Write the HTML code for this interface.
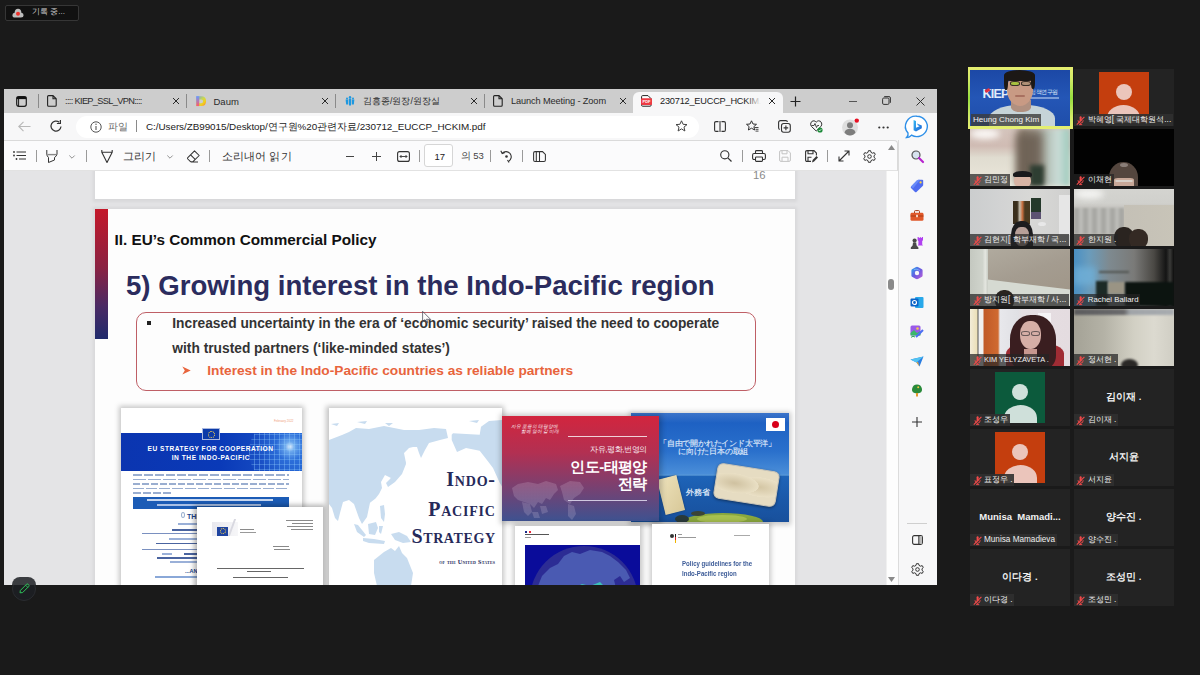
<!DOCTYPE html>
<html><head><meta charset="utf-8">
<style>
*{margin:0;padding:0;box-sizing:border-box}
html,body{width:1200px;height:675px;overflow:hidden;background:#1a1a1a;font-family:"Liberation Sans",sans-serif}
.a{position:absolute}
svg{position:absolute;overflow:visible}
.t{position:absolute;white-space:nowrap;line-height:1}
.tile{position:absolute;width:100px;height:57px;background:#232323;overflow:hidden}
.lbl{position:absolute;left:0;bottom:0;height:12px;background:#2e2e2e;color:#e8e8e8;font-size:9px;line-height:12px;padding:0 3px 0 14px;white-space:nowrap}
.cname{position:absolute;left:0;width:100px;top:22px;text-align:center;color:#f0f0f0;font-weight:bold;font-size:10px}
</style></head><body>
<!-- recording indicator -->
<div class="a" style="left:5px;top:5px;width:74px;height:16px;background:#111;border:1px solid #363636;border-radius:2px"></div>
<svg style="left:11.5px;top:7.5px" width="12" height="10" viewBox="0 0 12 10"><path d="M3 9.5 Q0.4 9.5 0.4 7.2 Q0.4 5 2.6 4.8 Q2.8 0.8 6 0.8 Q9.2 0.8 9.4 4.8 Q11.6 5 11.6 7.2 Q11.6 9.5 9 9.5 Z" fill="#bdbdbd"/><circle cx="6" cy="5.8" r="2" fill="#f0302a"/></svg>
<div class="t" style="left:32px;top:8px;font-size:8px;color:#cfcfcf">기록 중...</div>

<!-- browser frame -->
<div class="a" style="left:4px;top:89px;width:933px;height:496px;background:#f7f7f8"></div>
<!-- tab bar -->
<div class="a" style="left:4px;top:89px;width:933px;height:24px;background:#cdcdcd"></div>
<!-- active tab -->
<div class="a" style="left:632.5px;top:92px;width:150px;height:21px;background:#f7f7f8;border-radius:6px 6px 0 0"></div>
<!-- tab bar icons -->
<svg style="left:16px;top:96px" width="11" height="11" viewBox="0 0 11 11"><rect x="0.7" y="0.7" width="9.6" height="9.6" rx="2" fill="none" stroke="#1a1a1a" stroke-width="1.2"/><rect x="0.7" y="0.7" width="9.6" height="2.4" fill="#111"/><line x1="2.6" y1="3" x2="2.6" y2="10" stroke="#1a1a1a" stroke-width="1"/></svg>
<div class="a" style="left:38px;top:94px;width:1px;height:14px;background:#8a8a8a"></div>
<svg style="left:47px;top:95px" width="10" height="12" viewBox="0 0 10 12"><path d="M1.6 0.6 H6 L9.2 3.8 V10.2 Q9.2 11.2 8.2 11.2 H1.6 Q0.6 11.2 0.6 10.2 V1.6 Q0.6 0.6 1.6 0.6 Z M6 0.6 V3.8 H9.2" fill="none" stroke="#222" stroke-width="1.1"/></svg>
<div class="t" style="left:65px;top:96.5px;font-size:9.2px;color:#2a2a2a;letter-spacing:-0.65px">:::: KIEP_SSL_VPN::::</div>
<svg style="left:172px;top:97px" width="8" height="8" viewBox="0 0 8 8"><path d="M1 1 L7 7 M7 1 L1 7" stroke="#2a2a2a" stroke-width="1"/></svg>
<div class="a" style="left:186px;top:94px;width:1px;height:14px;background:#8a8a8a"></div>
<svg style="left:196px;top:95.7px" width="10.4" height="10.4" viewBox="0 0 10.4 10.4"><defs><linearGradient id="dg1" x1="0" y1="0" x2="0" y2="1"><stop offset="0" stop-color="#6a98ff"/><stop offset="1" stop-color="#ff5a6a"/></linearGradient><linearGradient id="dg2" x1="0" y1="0" x2="1" y2="1"><stop offset="0" stop-color="#6aa0f0"/><stop offset="0.45" stop-color="#c8d850"/><stop offset="0.7" stop-color="#f0d020"/><stop offset="1" stop-color="#ff7a30"/></linearGradient></defs><path d="M0.3 0.3 H5.2 Q10.1 0.3 10.1 5.2 Q10.1 10.1 5.2 10.1 H0.3 Z M3.2 3.4 V7.2 H5.2 Q7.1 7.2 7.1 5.3 Q7.1 3.4 5.2 3.4 Z" fill="url(#dg2)" fill-rule="evenodd"/><path d="M0.3 0.3 H3.2 V10.1 H0.3 Z" fill="url(#dg1)"/></svg>
<div class="t" style="left:213.5px;top:96.5px;font-size:9.5px;color:#2a2a2a">Daum</div>
<svg style="left:321px;top:97px" width="8" height="8" viewBox="0 0 8 8"><path d="M1 1 L7 7 M7 1 L1 7" stroke="#2a2a2a" stroke-width="1"/></svg>
<div class="a" style="left:335px;top:94px;width:1px;height:14px;background:#8a8a8a"></div>
<svg style="left:344.5px;top:96px" width="10" height="10" viewBox="0 0 10 10"><g fill="#1e98e0"><circle cx="5" cy="1.3" r="1.2"/><path d="M3.8 2.6 H6.2 L6 9.4 H4 Z"/><circle cx="2" cy="2.4" r="1"/><path d="M0.6 3.6 H3.2 L3.2 8.4 H1.2 Z"/><circle cx="8" cy="2.4" r="1"/><path d="M6.8 3.6 H9.4 L8.8 8.4 H6.8 Z"/></g></svg>
<div class="t" style="left:363px;top:96.5px;font-size:8.8px;color:#2a2a2a">김흥종/원장/원장실</div>
<svg style="left:470px;top:97px" width="8" height="8" viewBox="0 0 8 8"><path d="M1 1 L7 7 M7 1 L1 7" stroke="#2a2a2a" stroke-width="1"/></svg>
<div class="a" style="left:484px;top:94px;width:1px;height:14px;background:#8a8a8a"></div>
<svg style="left:493px;top:95px" width="10" height="12" viewBox="0 0 10 12"><path d="M1.6 0.6 H6 L9.2 3.8 V10.2 Q9.2 11.2 8.2 11.2 H1.6 Q0.6 11.2 0.6 10.2 V1.6 Q0.6 0.6 1.6 0.6 Z M6 0.6 V3.8 H9.2" fill="none" stroke="#222" stroke-width="1.1"/></svg>
<div class="t" style="left:511px;top:96.5px;font-size:9.2px;color:#2a2a2a;letter-spacing:-0.1px">Launch Meeting - Zoom</div>
<svg style="left:619px;top:97px" width="8" height="8" viewBox="0 0 8 8"><path d="M1 1 L7 7 M7 1 L1 7" stroke="#2a2a2a" stroke-width="1"/></svg>
<svg style="left:641px;top:95px" width="11" height="12" viewBox="0 0 11 12"><path d="M1.6 0.6 H7 L10 3.6 V10.4 Q10 11.2 9.2 11.2 H1.6 Q0.6 11.2 0.6 10.2 V1.6 Q0.6 0.6 1.6 0.6 Z" fill="#fff" stroke="#222" stroke-width="1"/><rect x="0" y="3.3" width="11" height="6.7" rx="1" fill="#ee3b44"/><text x="5.5" y="8.2" font-size="4" fill="#fff" text-anchor="middle" font-family="Liberation Sans" font-weight="bold">PDF</text></svg>
<div class="a" style="left:660px;top:95px;width:101px;height:13px;overflow:hidden"><div class="t" style="left:0;top:1.5px;font-size:9.2px;color:#222;letter-spacing:-0.2px">230712_EUCCP_HCKIM.pdf</div><div class="a" style="left:86px;top:0;width:15px;height:13px;background:linear-gradient(90deg,rgba(247,247,248,0),#f7f7f8)"></div></div>
<svg style="left:768px;top:97px" width="8" height="8" viewBox="0 0 8 8"><path d="M1 1 L7 7 M7 1 L1 7" stroke="#2a2a2a" stroke-width="1"/></svg>
<svg style="left:790px;top:95.5px" width="11" height="11" viewBox="0 0 11 11"><path d="M5.5 0.5 V10.5 M0.5 5.5 H10.5" stroke="#222" stroke-width="1.2"/></svg>
<div class="a" style="left:849px;top:100.5px;width:8px;height:1px;background:#555"></div>
<svg style="left:882px;top:96px" width="9" height="9" viewBox="0 0 9 9"><rect x="0.6" y="2" width="6.4" height="6.4" rx="1.2" fill="none" stroke="#333" stroke-width="1"/><path d="M2.2 0.6 H7 Q8.4 0.6 8.4 2 V6.8" fill="none" stroke="#333" stroke-width="1"/></svg>
<svg style="left:916px;top:96.5px" width="9" height="9" viewBox="0 0 9 9"><path d="M0.5 0.5 L8.5 8.5 M8.5 0.5 L0.5 8.5" stroke="#333" stroke-width="1"/></svg>

<!-- address row -->
<div class="a" style="left:76px;top:115.5px;width:623px;height:22px;background:#fff;border-radius:11px"></div>
<svg style="left:18px;top:120.5px" width="13" height="11" viewBox="0 0 13 11"><path d="M12.5 5.5 H1 M5.5 0.8 L0.8 5.5 L5.5 10.2" fill="none" stroke="#b8b8b8" stroke-width="1.1"/></svg>
<svg style="left:50px;top:120px" width="13" height="12" viewBox="0 0 13 12"><path d="M11 6.5 A5 5 0 1 1 9.3 2.3" fill="none" stroke="#333" stroke-width="1.2"/><path d="M10.4 0 V3.5 H6.9" fill="none" stroke="#333" stroke-width="1.2"/></svg>
<svg style="left:90px;top:120.5px" width="12" height="12" viewBox="0 0 12 12"><circle cx="6" cy="6" r="5.2" fill="none" stroke="#555" stroke-width="1"/><path d="M6 5 V9" stroke="#555" stroke-width="1.1"/><circle cx="6" cy="3.3" r="0.7" fill="#555"/></svg>
<div class="t" style="left:108px;top:121.5px;font-size:10px;color:#666">파일</div>
<div class="a" style="left:136px;top:120px;width:1px;height:12px;background:#8a8a8a"></div>
<div class="t" style="left:146px;top:122px;font-size:9.9px;color:#222;letter-spacing:-0.05px">C:/Users/ZB99015/Desktop/연구원%20관련자료/230712_EUCCP_HCKIM.pdf</div>
<svg style="left:675px;top:120px" width="13" height="12" viewBox="0 0 13 12"><path d="M6.5 0.8 L8.1 4.3 L12 4.6 L9 7.1 L9.9 11 L6.5 8.9 L3.1 11 L4 7.1 L1 4.6 L4.9 4.3 Z" fill="none" stroke="#444" stroke-width="1" stroke-linejoin="round"/></svg>
<svg style="left:714px;top:120.5px" width="12" height="11" viewBox="0 0 12 11"><path d="M4.5 0.6 H2 Q0.6 0.6 0.6 2 V9 Q0.6 10.4 2 10.4 H4.5 M7.5 0.6 H10 Q11.4 0.6 11.4 2 V9 Q11.4 10.4 10 10.4 H7.5 M6 0 V11" fill="none" stroke="#333" stroke-width="1.1"/></svg>
<svg style="left:746px;top:120px" width="13" height="12" viewBox="0 0 13 12"><path d="M5.5 0.8 L7 4 L10.5 4.3 L7.9 6.6 L8.6 10 L5.5 8.2 L2.4 10 L3.1 6.6 L0.5 4.3 L4 4 Z" fill="none" stroke="#333" stroke-width="1" stroke-linejoin="round"/><path d="M8.5 7.5 H12.5 M9.5 9.3 H12.5 M9.5 11.1 H12.5" stroke="#333" stroke-width="0.9"/></svg>
<svg style="left:778px;top:120px" width="13" height="13" viewBox="0 0 13 13"><rect x="3.5" y="3.5" width="8.8" height="8.8" rx="2.2" fill="none" stroke="#333" stroke-width="1.1"/><path d="M1.8 9.5 Q0.6 9.2 0.6 7.8 V2.6 Q0.6 0.6 2.6 0.6 H7.8 Q9.2 0.6 9.5 1.8" fill="none" stroke="#333" stroke-width="1.1"/><path d="M7.9 5.6 V10.2 M5.6 7.9 H10.2" stroke="#333" stroke-width="1.1"/></svg>
<svg style="left:810px;top:120px" width="13" height="13" viewBox="0 0 13 13"><path d="M6.2 11 L1.5 6.5 Q0.2 5 0.8 3 Q1.8 0.5 4 0.8 Q5.3 1 6.2 2.2 Q7.1 1 8.4 0.8 Q10.6 0.5 11.6 3 Q12.2 5 10.9 6.5 Z" fill="none" stroke="#333" stroke-width="1"/><path d="M1.5 5.5 H4 L5 3.5 L6.5 7.5 L7.5 5.5 H9" fill="none" stroke="#333" stroke-width="0.9"/><circle cx="10" cy="10" r="2.6" fill="#1d8a3a"/><path d="M8.8 10 L9.7 10.9 L11.3 9.2" fill="none" stroke="#fff" stroke-width="0.8"/></svg>
<svg style="left:841px;top:117px" width="20" height="20" viewBox="0 0 20 20"><circle cx="9" cy="10.5" r="8" fill="#dedede"/><circle cx="9" cy="8.2" r="3" fill="#7d7d7d"/><path d="M3.5 15.5 Q4.5 11.8 9 11.8 Q13.5 11.8 14.5 15.5 Q12.5 18.5 9 18.5 Q5.5 18.5 3.5 15.5 Z" fill="#7d7d7d"/><circle cx="15.8" cy="3.6" r="2.2" fill="#e81123"/></svg>
<svg style="left:878px;top:125.5px" width="11" height="3" viewBox="0 0 11 3"><circle cx="1.3" cy="1.5" r="1.1" fill="#333"/><circle cx="5.5" cy="1.5" r="1.1" fill="#333"/><circle cx="9.7" cy="1.5" r="1.1" fill="#333"/></svg>
<svg style="left:905px;top:115px" width="24" height="24" viewBox="0 0 24 24"><defs><linearGradient id="bg1" x1="0" y1="0" x2="1" y2="1"><stop offset="0" stop-color="#37b9f1"/><stop offset="1" stop-color="#1b62d8"/></linearGradient></defs><path d="M12 1.2 A10.5 10.2 0 1 1 6.5 20.2 Q4 22.6 1.6 22.6 Q3.6 20.6 3 18 A10.5 10.2 0 0 1 12 1.2 Z" fill="#fff" stroke="#2d8fe8" stroke-width="1.4"/><path d="M8.6 5 L11 5.9 V12.8 L14.6 11.2 L12.8 10.3 L12 8.6 L16.8 10.4 V13.3 L11 16.6 L8.6 15.2 Z" fill="url(#bg1)"/></svg>

<!-- pdf toolbar -->
<div class="a" style="left:4px;top:140px;width:894px;height:31px;background:#fbfbfc;border-top:1px solid #dadada;border-right:1px solid #dadada;border-bottom:1px solid #e2e2e2;border-top-right-radius:4px"></div>
<svg style="left:13px;top:151px" width="14" height="9" viewBox="0 0 14 9"><circle cx="1" cy="1" r="0.9" fill="#333"/><circle cx="1" cy="4.5" r="0.9" fill="#333"/><circle cx="3.5" cy="8" r="0.9" fill="#333"/><path d="M3.5 1 H13 M3.5 4.5 H13 M6 8 H13" stroke="#333" stroke-width="1"/></svg>
<div class="a" style="left:36px;top:150px;width:1px;height:12px;background:#9a9a9a"></div>
<svg style="left:46px;top:150px" width="12" height="13" viewBox="0 0 12 13"><path d="M0.8 0 V4 Q0.8 6 2.5 7.5 V12.5 L8.5 10 V7.5 Q11 6 11 4 V0" fill="none" stroke="#333" stroke-width="1"/><path d="M1.5 4.6 H10.3" stroke="#888" stroke-width="1.4"/></svg>
<svg style="left:69px;top:155px" width="6" height="4" viewBox="0 0 6 4"><path d="M0.3 0.5 L3 3.2 L5.7 0.5" fill="none" stroke="#777" stroke-width="0.8"/></svg>
<div class="a" style="left:86px;top:150px;width:1px;height:12px;background:#9a9a9a"></div>
<svg style="left:101px;top:150px" width="12" height="13" viewBox="0 0 12 13"><path d="M0.8 0 V2.2 H11.2 V0 M0.8 2.2 L6 12.5 L11.2 2.2" fill="none" stroke="#333" stroke-width="1.1" stroke-linejoin="round"/></svg>
<div class="t" style="left:122.5px;top:151px;font-size:10.5px;color:#333">그리기</div>
<svg style="left:167px;top:155px" width="6" height="4" viewBox="0 0 6 4"><path d="M0.3 0.5 L3 3.2 L5.7 0.5" fill="none" stroke="#777" stroke-width="0.8"/></svg>
<svg style="left:187px;top:150px" width="13" height="13" viewBox="0 0 13 13"><path d="M7.5 0.8 L12.2 5.5 L6 11.7 H3.5 L0.8 9 Q0.2 8.3 0.8 7.6 Z M3.6 4.8 L8.4 9.6 M4 12 H11" fill="none" stroke="#333" stroke-width="1.05" stroke-linejoin="round"/></svg>
<div class="a" style="left:209px;top:150px;width:1px;height:12px;background:#9a9a9a"></div>
<div class="t" style="left:222px;top:151px;font-size:10.5px;color:#333;letter-spacing:0.1px">소리내어 읽기</div>
<div class="a" style="left:346px;top:155.5px;width:8px;height:1px;background:#444"></div>
<svg style="left:372px;top:151.5px" width="9" height="9" viewBox="0 0 9 9"><path d="M4.5 0 V9 M0 4.5 H9" stroke="#444" stroke-width="1"/></svg>
<svg style="left:397px;top:150.5px" width="13" height="11" viewBox="0 0 13 11"><rect x="0.6" y="0.6" width="11.8" height="9.8" rx="2" fill="none" stroke="#333" stroke-width="1.1"/><path d="M3 5.5 H10 M4.5 4 L3 5.5 L4.5 7 M8.5 4 L10 5.5 L8.5 7" fill="none" stroke="#333" stroke-width="0.9"/></svg>
<div class="a" style="left:419px;top:150px;width:1px;height:12px;background:#9a9a9a"></div>
<div class="a" style="left:424px;top:144px;width:29px;height:23px;background:#fff;border:1px solid #d6d6d6;border-radius:3px"></div>
<div class="t" style="left:434.5px;top:151.5px;font-size:9.5px;color:#222">17</div>
<div class="t" style="left:460.5px;top:151px;font-size:9.5px;color:#444">의 53</div>
<div class="a" style="left:490px;top:150px;width:1px;height:12px;background:#9a9a9a"></div>
<svg style="left:500px;top:149.5px" width="13" height="13" viewBox="0 0 13 13"><path d="M2.2 3.3 A5.2 5.2 0 1 1 8.5 11.4" fill="none" stroke="#333" stroke-width="1.1"/><path d="M0.8 0.8 L2.2 3.6 L5 2.4" fill="none" stroke="#333" stroke-width="1.1"/><circle cx="6.5" cy="6.5" r="1.3" fill="#333"/><path d="M7.5 10 L9 12.5" stroke="#333" stroke-width="1.1"/></svg>
<div class="a" style="left:522px;top:150px;width:1px;height:12px;background:#9a9a9a"></div>
<svg style="left:533px;top:150.5px" width="13" height="11" viewBox="0 0 13 11"><path d="M6.5 0.6 H2 Q0.6 0.6 0.6 2 V9 Q0.6 10.4 2 10.4 H6.5 Z M6.5 0.6 H9.5 L12.4 3.5 V9 Q12.4 10.4 11 10.4 H6.5 M3.3 0.6 V10.4" fill="none" stroke="#333" stroke-width="1.05"/></svg>
<svg style="left:720px;top:150px" width="12" height="12" viewBox="0 0 12 12"><circle cx="4.8" cy="4.8" r="4.1" fill="none" stroke="#333" stroke-width="1.1"/><path d="M7.8 7.8 L11.5 11.5" stroke="#333" stroke-width="1.2"/></svg>
<div class="a" style="left:742px;top:150px;width:1px;height:12px;background:#9a9a9a"></div>
<svg style="left:752px;top:150px" width="14" height="12" viewBox="0 0 14 12"><path d="M3.5 3.5 V1.5 Q3.5 0.6 4.5 0.6 H9.5 Q10.5 0.6 10.5 1.5 V3.5" fill="none" stroke="#333" stroke-width="1.1"/><path d="M3 9.5 H2 Q0.6 9.5 0.6 8 V5 Q0.6 3.5 2 3.5 H12 Q13.4 3.5 13.4 5 V8 Q13.4 9.5 12 9.5 H11" fill="none" stroke="#333" stroke-width="1.1"/><rect x="3.5" y="7" width="7" height="4.4" rx="0.8" fill="none" stroke="#333" stroke-width="1.1"/></svg>
<svg style="left:779px;top:150px" width="12" height="12" viewBox="0 0 12 12"><path d="M0.6 2 Q0.6 0.6 2 0.6 H9 L11.4 3 V10 Q11.4 11.4 10 11.4 H2 Q0.6 11.4 0.6 10 Z M3 0.6 V3.8 H8 V0.6 M3 11.4 V7.2 H9 V11.4" fill="none" stroke="#c4c4c4" stroke-width="1"/></svg>
<svg style="left:805px;top:150px" width="13" height="13" viewBox="0 0 13 13"><path d="M6 11.4 H2 Q0.6 11.4 0.6 10 V2 Q0.6 0.6 2 0.6 H9 L11.4 3 V5.5 M3 0.6 V3.8 H8 V0.6 M3 11.4 V7.2 H6.5" fill="none" stroke="#333" stroke-width="1.1"/><path d="M7 12.5 L7.6 10 L11.5 6.1 L13 7.6 L9.1 11.5 Z" fill="#333"/></svg>
<div class="a" style="left:827px;top:150px;width:1px;height:12px;background:#9a9a9a"></div>
<svg style="left:838px;top:150px" width="12" height="12" viewBox="0 0 12 12"><path d="M1 11 L11 1 M6.5 1 H11 V5.5 M1 6.5 V11 H5.5" fill="none" stroke="#333" stroke-width="1.1"/></svg>
<svg style="left:863px;top:149.5px" width="13" height="13" viewBox="0 0 13 13"><path d="M5.4 0.7 H7.6 L8 2.4 L9.5 3.2 L11.2 2.6 L12.3 4.5 L11 5.7 V7.3 L12.3 8.5 L11.2 10.4 L9.5 9.8 L8 10.6 L7.6 12.3 H5.4 L5 10.6 L3.5 9.8 L1.8 10.4 L0.7 8.5 L2 7.3 V5.7 L0.7 4.5 L1.8 2.6 L3.5 3.2 L5 2.4 Z" fill="none" stroke="#333" stroke-width="1" stroke-linejoin="round"/><circle cx="6.5" cy="6.5" r="1.8" fill="none" stroke="#333" stroke-width="1"/></svg>

<!-- pdf view -->
<div class="a" style="left:4px;top:171px;width:882px;height:414px;background:#e4e4e6;overflow:hidden"></div>
<div class="a" style="left:886px;top:171px;width:12px;height:414px;background:#fdfdfd;border-left:1px solid #f0f0f0"></div>
<svg style="left:888px;top:145px" width="7" height="5" viewBox="0 0 7 5"><path d="M0 5 L3.5 0 L7 5 Z" fill="#8a8a8a"/></svg>
<svg style="left:888px;top:577px" width="7" height="5" viewBox="0 0 7 5"><path d="M0 0 L3.5 5 L7 0 Z" fill="#8a8a8a"/></svg>
<div class="a" style="left:888px;top:278.5px;width:6px;height:11.5px;background:#8a8a8a;border-radius:3px"></div>
<div class="a" style="left:898px;top:140px;width:1px;height:445px;background:#dcdcdc"></div>

<!-- pdf pages -->
<div class="a" style="left:0;top:0;width:886px;height:585px;clip-path:inset(171px 0 0 4px)">
  <div class="a" style="left:93px;top:150px;width:704px;height:52px;background:rgba(0,0,0,0.05);filter:blur(1.5px)"></div>
  <div class="a" style="left:95px;top:150px;width:700px;height:49px;background:#fff"></div>
  <div class="t" style="left:753px;top:170px;font-size:11.3px;color:#8a8a8a">16</div>
  <div class="a" style="left:93px;top:207px;width:704px;height:400px;background:rgba(0,0,0,0.05);filter:blur(1.5px)"></div>
  <div class="a" style="left:95px;top:209px;width:700px;height:400px;background:#fdfdfd"></div>
  <div class="a" style="left:95px;top:209px;width:12.7px;height:130px;background:linear-gradient(180deg,#c4182a 0%,#8a2242 45%,#4a2a64 75%,#1f2a6c 100%)"></div>
  <div class="t" style="left:114.5px;top:232px;font-size:15.3px;font-weight:bold;color:#111">II. EU’s Common Commercial Policy</div>
  <div class="t" style="left:126px;top:271.6px;font-size:27.6px;font-weight:bold;color:#2b2c5e">5) Growing interest in the Indo-Pacific region</div>
  <div class="a" style="left:135.5px;top:311.5px;width:620px;height:79px;border:1.5px solid #bf5f66;border-radius:10px"></div>
  <div class="a" style="left:147px;top:321px;width:4px;height:4px;background:#222"></div>
  <div class="t" style="left:172.3px;top:317px;font-size:13.77px;font-weight:bold;color:#333">Increased uncertainty in the era of ‘economic security’ raised the need to cooperate</div>
  <div class="t" style="left:172.3px;top:341.5px;font-size:13.77px;font-weight:bold;color:#333">with trusted partners (‘like-minded states’)</div>
  <svg style="left:182px;top:366px" width="9" height="9" viewBox="0 0 9 9"><path d="M0.3 0.5 L8.7 4.5 L0.3 8.5 L2.8 4.5 Z" fill="#e8643c"/></svg>
  <div class="t" style="left:207.3px;top:364.4px;font-size:13.7px;font-weight:bold;color:#e8643c">Interest in the Indo-Pacific countries as reliable partners</div>
  <svg style="left:422px;top:311px" width="11" height="13" viewBox="0 0 11 13"><path d="M0.6 0.3 L0.6 10.8 L3 8.6 L4.6 12 L6 11.4 L4.5 8.2 L8.8 8.6 Z" fill="none" stroke="#505060" stroke-width="0.8" stroke-linejoin="round"/></svg>
  <!-- IMAGES -->
  <!-- EU doc -->
  <div class="a" style="left:119px;top:406px;width:185px;height:190px;background:rgba(0,0,0,0.22);filter:blur(2.5px)"></div>
  <div class="a" style="left:121px;top:408px;width:181px;height:190px;background:#fff;overflow:hidden">
    <div class="a" style="left:0;top:25px;width:181px;height:38px;background:linear-gradient(90deg,#0b35b0 0%,#0a3ab8 55%,#1448c0 75%,#1f60d0 100%);overflow:hidden">
      <div class="a" style="left:128px;top:-14px;width:66px;height:66px;border-radius:50%;background:radial-gradient(circle at 62% 42%,rgba(230,245,255,.95) 0,rgba(140,200,250,.7) 5px,rgba(60,130,230,.5) 14px,rgba(40,100,210,.2) 33px);"></div>
      <div class="a" style="left:128px;top:-14px;width:66px;height:66px;border-radius:50%;background:repeating-linear-gradient(90deg,rgba(150,210,255,.35) 0 1px,transparent 1px 5px),repeating-linear-gradient(0deg,rgba(150,210,255,.3) 0 1px,transparent 1px 5px)"></div>
    </div>
    <div class="a" style="left:81px;top:19.5px;width:17.5px;height:12.5px;background:#0b3aa8;border:0.8px solid #a9b8e0"><div class="a" style="left:4.5px;top:2px;width:7px;height:7px;border:1px dotted #ffd84a;border-radius:50%"></div></div>
    <div class="t" style="left:153px;top:12px;font-size:3px;color:#f0a080">February 2022</div>
    <div class="t" style="left:26.5px;top:38.3px;font-size:6.6px;font-weight:bold;color:#fff;letter-spacing:0.5px">EU STRATEGY FOR COOPERATION</div>
    <div class="t" style="left:50.7px;top:47px;font-size:6.6px;font-weight:bold;color:#fff;letter-spacing:0.55px">IN THE INDO-PACIFIC</div>
    <div class="a" style="left:11.6px;top:66px;width:156px;height:1.5px;background:repeating-linear-gradient(90deg,#9aaed0 0 9px,transparent 9px 11px)"></div>
    <div class="a" style="left:11.6px;top:70.5px;width:156px;height:1.5px;background:repeating-linear-gradient(90deg,#9aaed0 0 13px,transparent 13px 15px)"></div>
    <div class="a" style="left:11.6px;top:75px;width:156px;height:1.5px;background:repeating-linear-gradient(90deg,#9aaed0 0 7px,transparent 7px 9px)"></div>
    <div class="a" style="left:11.6px;top:79.5px;width:156px;height:1.5px;background:repeating-linear-gradient(90deg,#9aaed0 0 11px,transparent 11px 13px)"></div>
    <div class="a" style="left:11.6px;top:84px;width:40px;height:1.5px;background:repeating-linear-gradient(90deg,#9aaed0 0 8px,transparent 8px 10px)"></div>
    <div class="a" style="left:11.6px;top:88.5px;width:156.4px;height:12.4px;background:#1c5cb6"></div>
    <div class="a" style="left:26px;top:90.7px;width:126px;height:2.2px;background:#c8d8f0"></div>
    <div class="a" style="left:36px;top:95.7px;width:104px;height:2.2px;background:#a9c0e6"></div>
    <div class="a" style="left:60px;top:104px;width:4px;height:6px;border:1px solid #9ab0d0;border-radius:50% 50% 50% 50%"></div>
    <div class="t" style="left:66px;top:104.5px;font-size:7px;font-weight:bold;color:#1a3f8a">THE</div>
    <div class="a" style="left:57px;top:115px;width:22px;height:1.5px;background:#9ab0d8"></div>
    <div class="a" style="left:51px;top:121px;width:26px;height:1.5px;background:#4a64a0"></div>
    <div class="a" style="left:21px;top:124.5px;width:60px;height:1px;background:#7a90c0"></div>
    <div class="a" style="left:48px;top:130px;width:30px;height:1.5px;background:#9ab0d8"></div>
    <div class="a" style="left:35px;top:134.5px;width:42px;height:1.5px;background:#4a64a0"></div>
    <div class="a" style="left:21px;top:140.5px;width:60px;height:1px;background:#7a90c0"></div>
    <div class="a" style="left:41px;top:145px;width:10px;height:1.5px;background:#9ab0d8"></div>
    <div class="a" style="left:63px;top:145px;width:14px;height:1.5px;background:#4a64a0"></div>
    <div class="a" style="left:36px;top:149px;width:42px;height:1.5px;background:#4a64a0"></div>
    <div class="a" style="left:49px;top:153px;width:28px;height:1.5px;background:#9ab0d8"></div>
    <div class="t" style="left:64px;top:160.5px;font-size:5.5px;font-weight:bold;color:#1a3f8a">...AND T</div>
    <div class="a" style="left:34px;top:168px;width:44px;height:1.5px;background:#8aa8d8"></div>
  </div>
  <!-- US doc -->
  <div class="a" style="left:326px;top:406px;width:178px;height:190px;background:rgba(0,0,0,0.22);filter:blur(2.5px)"></div>
  <div class="a" style="left:328.5px;top:408.3px;width:173.5px;height:190px;background:#fff;overflow:hidden">
    <svg style="left:0;top:0" width="174" height="190" viewBox="0 0 174 190">
      <g fill="#c8dcef">
      <path d="M0,32 L13,27 L20,24 L27,20 L40,21 L55,18 L75,22 L90,22 L105,20 L117,21 L119,30 L111,32 L100,35 L96,42 L92,50 L90,45 L88,39 L84,39 L80,40 L75,45 L77,55 L71,65 L62,70 L56,67 L52,74 L53,80 L50,86 L46.5,90.5 L41,94.7 L38,109 L33,116 L30,110 L25,96 L20,92 L14,94 L11,105 L9,113 L6,110 L3,100 L0,96 Z"/>
      <path d="M61,71 L66,64 L72,58 L75,50 L77,56 L73,66 L66,74 L59,79 L57,75 Z"/>
      <path d="M51,98 L55,97 L56,106 L55,114 L52,110 Z"/>
      <path d="M25,116 L29,117 L37,127 L35,129 L28,124 Z"/>
      <path d="M34,130 L45,131 L56,133 L55,136 L40,135 L34,133 Z"/>
      <path d="M39,116 L47,114 L49,120 L46,127 L40,126 Z"/>
      <path d="M50,118 L54,118 L52,126 L50,124 Z"/>
      <path d="M62,126 L70,124 L78,128 L82,134 L74,135 L66,132 Z"/>
      <path d="M45,152 L55,144 L62,140 L66,143 L70,138 L73,145 L78,150 L84,165 L82,178 L48,178 L45,165 Z"/>
      <path d="M122.7,26.7 L124,25.3 L150.7,26.7 L152,18.7 L160,13 L174,12 L174,80 L170.7,74.7 L164,60 L158.7,53 L150.7,42.7 L137,40 L128,44 L122.7,32 Z"/>
      <path d="M2,16 L10,15 L8,18 Z M28,14 L38,13 L36,16 Z M56,15 L64,15 L60,18 Z M140,13 L150,12 L148,15 Z"/>
      </g>
    </svg>
    <div class="t" style="right:7px;top:61px;font-family:'Liberation Serif',serif;font-weight:bold;font-size:20px;color:#262a5a;font-variant:small-caps;letter-spacing:0.8px;margin-right:-0.8px">Indo-</div>
    <div class="t" style="right:7px;top:91px;font-family:'Liberation Serif',serif;font-weight:bold;font-size:20px;color:#262a5a;font-variant:small-caps;letter-spacing:0.8px;margin-right:-0.8px">Pacific</div>
    <div class="t" style="right:7px;top:118px;font-family:'Liberation Serif',serif;font-weight:bold;font-size:20px;color:#262a5a;font-variant:small-caps;letter-spacing:0.6px;margin-right:-0.6px">Strategy</div>
    <div class="t" style="right:7px;top:151px;font-family:'Liberation Serif',serif;font-weight:bold;font-size:6.3px;color:#262a5a;font-variant:small-caps;letter-spacing:0.2px;margin-right:-0.2px">of the United States</div>
  </div>
  <!-- Japan doc -->
  <div class="a" style="left:629px;top:411.5px;width:162px;height:113px;background:rgba(0,0,0,0.2);filter:blur(2.5px)"></div>
  <div class="a" style="left:631px;top:413.4px;width:157.5px;height:109px;overflow:hidden;background:linear-gradient(180deg,#1a5cc0 0%,#2a70cc 35%,#4a8ed8 56%,#5a9ad8 57%,#1e64b8 58%,#1a58a8 80%,#18509c 100%)">
    <div class="a" style="left:0;top:0;width:157.5px;height:10px;background:linear-gradient(180deg,rgba(255,255,255,.15),transparent)"></div>
    <div class="a" style="left:135px;top:4.5px;width:19px;height:13px;background:#fff"><div class="a" style="left:6px;top:3px;width:7px;height:7px;border-radius:50%;background:#d8001a"></div></div>
    <div class="t" style="left:28px;top:26.5px;font-size:7.5px;font-weight:bold;color:#c8dcf4;letter-spacing:-0.2px">「自由で開かれたインド太平洋」</div>
    <div class="t" style="left:47px;top:35px;font-size:7.5px;font-weight:bold;color:#c8dcf4;letter-spacing:-0.2px">に向けた日本の取組</div>
    <div class="a" style="left:30px;top:64px;width:20px;height:36px;background:linear-gradient(135deg,#ede2bc,#d8c898);transform:rotate(-14deg);box-shadow:0 0 2px rgba(0,0,0,.4)"></div>
    <div class="a" style="left:84px;top:54px;width:63px;height:36px;background:radial-gradient(ellipse at 30% 50%,#cfc1a0 0,#e9dfc4 40%,transparent 41%),radial-gradient(ellipse at 72% 50%,#d4c6a4 0,#eae0c6 40%,transparent 41%),#e6dcc2;border-radius:6px;transform:rotate(9deg);border:1.5px solid #c8c4b8;box-shadow:0 1px 3px rgba(0,0,0,.45)"></div>
    <div class="t" style="left:55px;top:75.5px;font-size:7.5px;font-weight:bold;color:#d8e4f4">外務省</div>
    <div class="a" style="left:52px;top:100px;width:80px;height:18px;border-radius:50% 50% 0 0;background:#8aa83e"></div>
    <div class="a" style="left:66px;top:102px;width:50px;height:8px;border-radius:50%;background:#a8c050"></div>
    <div class="a" style="left:44px;top:102px;width:14px;height:8px;border-radius:50%;background:#2a3a3a"></div>
    <div class="a" style="left:60px;top:98px;width:14px;height:5px;border-radius:50%;background:#3a4436"></div>
  </div>
  <!-- Korean doc -->
  <div class="a" style="left:500px;top:414px;width:162px;height:110px;background:rgba(0,0,0,0.2);filter:blur(2.5px)"></div>
  <div class="a" style="left:502px;top:416.2px;width:157.4px;height:105.3px;overflow:hidden;background:linear-gradient(180deg,#d2253e 0%,#b23052 35%,#7e3f6e 65%,#3e5290 100%)">
    <svg style="left:8px;top:62px" width="80" height="42" viewBox="0 0 80 42"><defs><pattern id="dots" width="1.5" height="1.5" patternUnits="userSpaceOnUse"><circle cx="0.75" cy="0.75" r="0.5" fill="#f0e0f0"/></pattern></defs><g fill="url(#dots)" opacity="0.5"><path d="M2,10 L8,6 L18,4 L28,6 L36,3 L46,6 L48,12 L44,16 L40,22 L36,20 L32,26 L28,24 L24,30 L20,26 L14,24 L8,22 L4,18 Z"/><path d="M12,24 L20,26 L22,34 L18,38 L14,34 Z"/><path d="M30,28 L36,28 L38,34 L32,36 Z"/><path d="M22,34 L28,34 L30,40 L24,40 Z"/><path d="M50,8 L60,3 L70,4 L74,10 L70,16 L64,20 L60,26 L54,22 L52,14 Z"/><path d="M58,26 L64,28 L66,36 L62,42 L58,38 Z"/></g></svg>
    <div class="t" style="left:9px;top:8.5px;font-size:4.8px;color:#f8e8ee;font-style:italic;letter-spacing:-0.1px">자유 포용의 태평양에</div>
    <div class="t" style="left:19px;top:14px;font-size:4.8px;color:#f8e8ee;font-style:italic;letter-spacing:-0.1px">함께 열어 갈 미래</div>
    <div class="a" style="left:65.5px;top:19.5px;width:79.5px;height:1px;background:#f0d0d8"></div>
    <div class="t" style="right:12.5px;top:29.5px;font-size:8px;color:#f6e6ee;letter-spacing:-0.4px">자유,평화,번영의</div>
    <div class="t" style="right:12.5px;top:43px;font-size:15px;font-weight:bold;color:#fff;letter-spacing:-0.6px">인도-태평양</div>
    <div class="t" style="right:12.5px;top:60px;font-size:15px;font-weight:bold;color:#fff;letter-spacing:-0.6px">전략</div>
    <div class="a" style="left:65.5px;top:83.5px;width:79.5px;height:1px;background:#d0c8e0"></div>
  </div>
  <!-- French doc -->
  <div class="a" style="left:512.5px;top:523.5px;width:130px;height:70px;background:rgba(0,0,0,0.2);filter:blur(2.5px)"></div>
  <div class="a" style="left:514.5px;top:525.5px;width:125.5px;height:70px;background:#fff;overflow:hidden">
    <div class="a" style="left:10px;top:5px;width:2.5px;height:2.5px;background:#1a2a8a"></div><div class="a" style="left:14px;top:5px;width:2.5px;height:2.5px;background:#e82a3a"></div>
    <div class="a" style="left:10px;top:8.5px;width:24px;height:1px;background:#555"></div>
    <div class="a" style="left:10px;top:11.5px;width:6px;height:0.8px;background:#999"></div>
    <div class="a" style="left:10px;top:19.5px;width:115px;height:50px;background:#0a0c9a;overflow:hidden">
      <div class="a" style="left:5px;top:1px;width:108px;height:108px;border-radius:50%;background:#2c2c94"></div>
      <svg style="left:5px;top:1px" width="108" height="50" viewBox="0 0 108 50"><path d="M8,40 L12,30 L20,22 L28,18 L34,10 L42,6 L50,8 L60,4 L72,6 L80,10 L88,16 L96,24 L100,32 L94,36 L90,30 L84,34 L86,42 L80,48 L70,50 L30,50 L20,46 L14,48 Z" fill="#4a5ab2"/><path d="M36,50 L44,42 L52,38 L60,40 L70,36 L76,42 L72,50 Z" fill="#3cc0b8"/></svg>
    </div>
  </div>
  <!-- German doc -->
  <div class="a" style="left:650px;top:522px;width:121px;height:70px;background:rgba(0,0,0,0.2);filter:blur(2.5px)"></div>
  <div class="a" style="left:651.8px;top:524.3px;width:117px;height:70px;background:#fff;overflow:hidden">
    <div class="a" style="left:18px;top:10px;width:4px;height:4px;border-radius:50%;background:#333"></div>
    <div class="a" style="left:23.5px;top:10px;width:1px;height:3px;background:#222"></div><div class="a" style="left:23.5px;top:13px;width:1px;height:3px;background:#d8242a"></div><div class="a" style="left:23.5px;top:16px;width:1px;height:3px;background:#f0b400"></div>
    <div class="a" style="left:26px;top:10px;width:4px;height:0.8px;background:#999"></div><div class="a" style="left:26px;top:12.5px;width:18px;height:0.8px;background:#999"></div>
    <div class="a" style="left:82px;top:10.5px;width:16px;height:0.8px;background:#aaa"></div>
    <div class="t" style="left:30px;top:36px;font-size:7.6px;font-weight:bold;color:#3d5c98;transform:scaleX(0.8);transform-origin:0 0">Policy guidelines for the</div>
    <div class="t" style="left:30px;top:46px;font-size:7.6px;font-weight:bold;color:#3d5c98;transform:scaleX(0.8);transform-origin:0 0">Indo-Pacific region</div>
  </div>
  <!-- JOIN doc -->
  <div class="a" style="left:194px;top:505px;width:131px;height:90px;background:rgba(0,0,0,0.3);filter:blur(2.5px)"></div>
  <div class="a" style="left:196.5px;top:507px;width:126.5px;height:90px;background:#fff;overflow:hidden">
    <div class="a" style="left:15px;top:15px;width:26px;height:14px;background:linear-gradient(90deg,#e8e8ee,#f6f6f8)"></div>
    <div class="a" style="left:20.5px;top:20px;width:11px;height:9px;background:#1f44a0"><div class="a" style="left:2.5px;top:1.2px;width:6px;height:6px;border:0.8px dotted #ffd84a;border-radius:50%"></div></div>
    <div class="a" style="left:34px;top:12px;width:2px;height:17px;background:#d8d8e0;transform:skewX(-20deg)"></div>
    <div class="a" style="left:43px;top:22px;width:14px;height:1px;background:#8a8a8a"></div>
    <div class="a" style="left:43px;top:25px;width:16px;height:1px;background:#999"></div>
    <div class="a" style="left:89px;top:12.5px;width:27px;height:1px;background:#8a8a8a"></div>
    <div class="a" style="left:95px;top:15.5px;width:21px;height:1px;background:#8a8a8a"></div>
    <div class="a" style="left:90px;top:18.5px;width:26px;height:1px;background:#8a8a8a"></div>
    <div class="a" style="left:94px;top:21.5px;width:22px;height:1px;background:#8a8a8a"></div>
    <div class="a" style="left:76px;top:39px;width:16px;height:1px;background:#888"></div>
    <div class="a" style="left:77px;top:42px;width:16px;height:1px;background:#888"></div>
    <div class="a" style="left:20px;top:61px;width:87px;height:1px;background:#666"></div>
    <div class="a" style="left:50px;top:64px;width:24px;height:1px;background:#666"></div>
    <div class="a" style="left:36px;top:70px;width:55px;height:1px;background:#666"></div>
  </div>

</div>

<!-- sidebar icons -->
<svg style="left:911px;top:150px" width="13" height="13" viewBox="0 0 13 13"><circle cx="5" cy="5" r="4" fill="#d7e3ef" stroke="#555" stroke-width="1.2"/><path d="M8 8 L12 12" stroke="#b622ce" stroke-width="2.2" stroke-linecap="round"/></svg>
<svg style="left:910px;top:179px" width="14" height="13" viewBox="0 0 14 13"><path d="M1 7.5 L7 1.3 Q7.5 0.8 8.3 0.8 H12.2 Q13.2 0.8 13.2 1.8 V5.7 Q13.2 6.5 12.7 7 L6.5 13 Q5.8 13.6 5 13 L1 9 Q0.4 8.3 1 7.5 Z" fill="#4f6cf0"/><path d="M1 7.5 L7 1.3 Q7.5 0.8 8.3 0.8 H10 L3 9.5 Z" fill="#7aa0ff" opacity="0.6"/><circle cx="10.6" cy="3.4" r="1.1" fill="#ffd43b"/></svg>
<svg style="left:910px;top:210px" width="14" height="11" viewBox="0 0 14 11"><path d="M4.5 3 V1.5 Q4.5 0.6 5.4 0.6 H8.6 Q9.5 0.6 9.5 1.5 V3" fill="none" stroke="#a33a16" stroke-width="1"/><rect x="0.5" y="2.8" width="13" height="8" rx="1.4" fill="#e0582a"/><rect x="0.5" y="5.5" width="13" height="1" fill="#a83a14"/><rect x="6" y="4.8" width="2" height="2.4" fill="#f5d0bf"/></svg>
<svg style="left:910px;top:236px" width="14" height="14" viewBox="0 0 14 14"><path d="M7.6 1 H8.8 V2 H9.8 V1 H10.8 V2 H11.8 V1 H13 V4.2 L12.2 5 V8.6 L13 9.6 H7.6 L8.4 8.6 V5 L7.6 4.2 Z" fill="#b040f0"/><circle cx="4.6" cy="4.6" r="2.1" fill="#4a4a4a"/><path d="M3 6.6 H6.2 L6.6 9.6 L8.4 11.4 V13 H0.8 V11.4 L2.6 9.6 Z" fill="#4a4a4a"/></svg>
<svg style="left:910px;top:266px" width="14" height="14" viewBox="0 0 14 14"><defs><linearGradient id="m1" x1="0" y1="0" x2="1" y2="1"><stop offset="0" stop-color="#2aa8f0"/><stop offset="0.5" stop-color="#6a5ae0"/><stop offset="1" stop-color="#c060d8"/></linearGradient></defs><path d="M7 0.8 Q7.8 0.8 8.4 1.2 L12 3.3 Q12.6 3.7 12.6 4.4 V9.6 Q12.6 10.3 12 10.7 L8.4 12.8 Q7.7 13.2 7 13.2 Q6.3 13.2 5.6 12.8 L2 10.7 Q1.4 10.3 1.4 9.6 V4.4 Q1.4 3.7 2 3.3 L5.6 1.2 Q6.2 0.8 7 0.8 Z" fill="url(#m1)"/><circle cx="7" cy="7" r="2.2" fill="#f7f7f8"/><path d="M4 3.5 Q7 2.5 10 4.5" fill="none" stroke="#8ad0ff" stroke-width="1" opacity=".6"/></svg>
<svg style="left:910px;top:295.5px" width="14" height="13" viewBox="0 0 14 13"><rect x="5" y="1" width="8.5" height="11" rx="1" fill="#28a8ea"/><rect x="0.5" y="2.5" width="8" height="8" rx="1" fill="#0a64c8"/><circle cx="4.5" cy="6.5" r="2" fill="none" stroke="#fff" stroke-width="1.2"/></svg>
<svg style="left:910px;top:325px" width="14" height="13" viewBox="0 0 14 13"><rect x="0.5" y="0.5" width="10" height="10" rx="1.5" fill="#9a5ae8"/><path d="M0.5 8 L4 5 L7 8 L10.5 6 V10.5 H0.5 Z" fill="#3ab86a"/><circle cx="7.5" cy="3.5" r="1.3" fill="#f2c94c"/><path d="M6 12 L13 5" stroke="#4c6ef5" stroke-width="2"/><path d="M1 12.3 Q3 10.5 5 12" fill="none" stroke="#2fa85a" stroke-width="1"/></svg>
<svg style="left:910px;top:355.5px" width="14" height="11" viewBox="0 0 14 11"><path d="M0.5 3.5 L13.5 0.5 L9.5 10.5 L6.5 6.5 Z" fill="#2a7de1"/><path d="M0.5 3.5 L6.5 6.5 L13.5 0.5 Z" fill="#52c3f1"/><path d="M6.5 6.5 L9.5 10.5 L8 6 Z" fill="#f0a830"/></svg>
<svg style="left:911px;top:383.5px" width="12" height="13" viewBox="0 0 12 13"><path d="M6 0.6 Q10 0.6 11 5 Q11.6 9 6 9.5 Q0.4 9 1 5 Q2 0.6 6 0.6 Z" fill="#2a8a3a"/><rect x="5" y="9" width="2" height="3.5" fill="#e39a2c"/><circle cx="7.2" cy="3.2" r="1" fill="#f5c542"/></svg>
<svg style="left:912px;top:416.5px" width="10" height="10" viewBox="0 0 10 10"><path d="M5 0 V10 M0 5 H10" stroke="#333" stroke-width="1.1"/></svg>
<div class="a" style="left:907px;top:523px;width:20px;height:1px;background:#cfcfcf"></div>
<svg style="left:912px;top:535px" width="11" height="10" viewBox="0 0 11 10"><rect x="0.6" y="0.6" width="9.8" height="8.8" rx="1.6" fill="none" stroke="#333" stroke-width="1.1"/><rect x="6.3" y="0.6" width="1.3" height="8.8" fill="#333"/><rect x="7.6" y="1.2" width="2.4" height="7.6" fill="#bbb"/></svg>
<svg style="left:910.5px;top:562.5px" width="13" height="13" viewBox="0 0 13 13"><path d="M5.4 0.7 H7.6 L8 2.4 L9.5 3.2 L11.2 2.6 L12.3 4.5 L11 5.7 V7.3 L12.3 8.5 L11.2 10.4 L9.5 9.8 L8 10.6 L7.6 12.3 H5.4 L5 10.6 L3.5 9.8 L1.8 10.4 L0.7 8.5 L2 7.3 V5.7 L0.7 4.5 L1.8 2.6 L3.5 3.2 L5 2.4 Z" fill="none" stroke="#333" stroke-width="1" stroke-linejoin="round"/><circle cx="6.5" cy="6.5" r="1.8" fill="none" stroke="#333" stroke-width="1"/></svg>

<!-- gallery -->
<div class="a" style="left:967.5px;top:67px;width:105px;height:61.5px;background:linear-gradient(180deg,#e6ee72 0%,#d0ea66 20%,#98de40 50%,#d0ea66 80%,#e6ee72 100%)"></div>
<div class="a" style="left:970px;top:69.5px;width:100px;height:56.5px;overflow:hidden;background:linear-gradient(180deg,#1c48a6 0%,#2456b6 50%,#1f4eaa 100%)">
  <div class="t" style="left:12.5px;top:18.5px;font-size:12.5px;font-weight:bold;color:#e2ecfa;letter-spacing:-0.8px">KIEP</div>
  <div class="a" style="left:15px;top:19px;width:5px;height:3px;background:#e03040;transform:rotate(-30deg)"></div>
  <div class="t" style="left:60px;top:19px;font-size:6px;color:#dde8f8;letter-spacing:-0.5px">정책연구원</div>
  <div class="a" style="left:61px;top:27.5px;width:28px;height:1.5px;background:#7a9cd8"></div>
  <div class="a" style="left:18.5px;top:35px;width:66px;height:30px;border-radius:45% 45% 0 0;background:#c6d4d8"></div>
  <div class="a" style="left:41px;top:30px;width:20px;height:12px;border-radius:0 0 40% 40%;background:#b09080"></div>
  <div class="a" style="left:37px;top:4px;width:26px;height:32px;border-radius:45% 45% 50% 50%;background:#c89a84"></div>
  <div class="a" style="left:34px;top:0px;width:31px;height:11px;border-radius:50% 50% 20% 20%;background:#1c1816"></div>
  <div class="a" style="left:34px;top:4px;width:4px;height:16px;border-radius:40%;background:#1c1816"></div>
  <div class="a" style="left:61px;top:4px;width:4px;height:15px;border-radius:40%;background:#1c1816"></div>
  <div class="a" style="left:40px;top:11.5px;width:10px;height:5px;border-radius:40%;border:1px solid #3a3028;background:#a8c040"></div>
  <div class="a" style="left:51px;top:11.5px;width:10px;height:5px;border-radius:40%;border:1px solid #3a3028;background:rgba(160,140,110,.6)"></div>
  <div class="a" style="left:45px;top:25px;width:10px;height:2px;border-radius:1px;background:#a87060"></div>
  <div class="a" style="left:1px;top:44.5px;width:70px;height:11.5px;background:rgba(60,60,60,.8)"></div>
  <div class="t" style="left:3px;top:46.6px;font-size:8.1px;color:#f4f4f4">Heung Chong Kim</div>
</div>
<div class="tile" style="left:1073.8px;top:69px"><div class="a" style="left:25px;top:3px;width:50px;height:51px;background:#c43e0e;overflow:hidden"><div class="a" style="left:17px;top:12px;width:16px;height:16px;border-radius:50%;background:#ebc5bb"></div><div class="a" style="left:8.5px;top:33px;width:33px;height:26px;border-radius:50% 50% 0 0;background:#ebc5bb"></div></div><div class="a" style="left:0;top:44.5px;width:99px;height:12.5px;background:rgba(48,48,48,.9);"><div class="t" style="left:14px;top:2.0px;font-size:8.2px;color:#f0f0f0">박혜영[ 국제대학원석...</div></div><svg style="left:2.5px;top:46.5px" width="9" height="9" viewBox="0 0 9 9"><path d="M3.6 1.2 Q3.6 0.2 4.6 0.2 Q5.6 0.2 5.6 1.2 V4.6 Q5.6 5.6 4.6 5.6 Q3.6 5.6 3.6 4.6 Z" fill="#f04a4a"/><path d="M2 4.2 Q2 7.2 4.6 7.2 Q7.2 7.2 7.2 4.2 M4.6 7.2 V8.6 M3 8.6 H6.2" fill="none" stroke="#f04a4a" stroke-width="0.9"/><path d="M8.4 0.8 L0.8 8.6" stroke="#f04a4a" stroke-width="1.1"/></svg></div>
<div class="tile" style="left:970px;top:129px"><div class="a" style="left:0;top:0;width:100px;height:57px;background:linear-gradient(180deg,#d4c4bc 0%,#d0bcb4 30%,#e0dcd0 50%,#ebe8dc 100%)"></div><div class="a" style="left:0;top:0;width:30px;height:10px;border-radius:50%;background:#fbf8f6;filter:blur(3px)"></div><div class="a" style="left:44px;top:0;width:56px;height:57px;background:linear-gradient(90deg,rgba(140,124,108,.0) 0%,#8e8070 15%,#9a9488 40%,#b8c4bc 62%,#cadcd6 78%,#9ccabc 100%);filter:blur(2px)"></div><div class="a" style="left:46px;top:4px;width:26px;height:50px;background:#6a5e52;filter:blur(4px);opacity:.85"></div><div class="a" style="left:60px;top:36px;width:14px;height:21px;background:#2e3e32;filter:blur(2px)"></div><div class="a" style="left:44px;top:45px;width:17px;height:14px;border-radius:45%;background:#d8b4a4"></div><div class="a" style="left:43px;top:42px;width:19px;height:6px;border-radius:50% 50% 20% 20%;background:#1a1a1c"></div><div class="a" style="left:0;top:44.5px;width:40px;height:12.5px;background:rgba(36,36,36,.72);"><div class="t" style="left:14px;top:2.0px;font-size:8.2px;color:#f0f0f0">김민정</div></div><svg style="left:2.5px;top:46.5px" width="9" height="9" viewBox="0 0 9 9"><path d="M3.6 1.2 Q3.6 0.2 4.6 0.2 Q5.6 0.2 5.6 1.2 V4.6 Q5.6 5.6 4.6 5.6 Q3.6 5.6 3.6 4.6 Z" fill="#f04a4a"/><path d="M2 4.2 Q2 7.2 4.6 7.2 Q7.2 7.2 7.2 4.2 M4.6 7.2 V8.6 M3 8.6 H6.2" fill="none" stroke="#f04a4a" stroke-width="0.9"/><path d="M8.4 0.8 L0.8 8.6" stroke="#f04a4a" stroke-width="1.1"/></svg></div>
<div class="tile" style="left:1073.8px;top:129px"><div class="a" style="left:0;top:0;width:100px;height:57px;background:#020202"></div><div class="a" style="left:35px;top:33px;width:29px;height:30px;border-radius:50% 50% 10% 10%;background:#54463e"></div><div class="a" style="left:46px;top:34px;width:8px;height:4px;border-radius:50%;background:#8a7e78"></div><div class="a" style="left:40px;top:49px;width:20px;height:10px;border-radius:20%;background:#c8a898"></div><div class="a" style="left:41px;top:50.5px;width:18px;height:2.5px;border-radius:1px;border:0.7px solid #d8d0c8"></div><div class="a" style="left:0;top:44.5px;width:40px;height:12.5px;background:rgba(36,36,36,.72);"><div class="t" style="left:14px;top:2.0px;font-size:8.2px;color:#f0f0f0">이채현</div></div><svg style="left:2.5px;top:46.5px" width="9" height="9" viewBox="0 0 9 9"><path d="M3.6 1.2 Q3.6 0.2 4.6 0.2 Q5.6 0.2 5.6 1.2 V4.6 Q5.6 5.6 4.6 5.6 Q3.6 5.6 3.6 4.6 Z" fill="#f04a4a"/><path d="M2 4.2 Q2 7.2 4.6 7.2 Q7.2 7.2 7.2 4.2 M4.6 7.2 V8.6 M3 8.6 H6.2" fill="none" stroke="#f04a4a" stroke-width="0.9"/><path d="M8.4 0.8 L0.8 8.6" stroke="#f04a4a" stroke-width="1.1"/></svg></div>
<div class="tile" style="left:970px;top:189px"><div class="a" style="left:0;top:0;width:100px;height:57px;background:linear-gradient(90deg,#cbcdce 0%,#d2d3d3 30%,#d8d8d6 60%,#d0d0cf 100%)"></div><div class="a" style="left:43px;top:12px;width:17px;height:23px;background:linear-gradient(90deg,#3a2e1c 0,#3a2e1c 25%,#c8c0b0 40%,#c87040 55%,#4a3a20 70%)"></div><div class="a" style="left:61px;top:9px;width:10px;height:14px;background:#24382a"></div><div class="a" style="left:61px;top:23px;width:10px;height:7px;background:#5c5272"></div><div class="a" style="left:89px;top:6px;width:11px;height:40px;background:#e6e6e6"></div><div class="a" style="left:68px;top:33px;width:8px;height:4px;border-radius:50%;background:#e8e8e8"></div><div class="a" style="left:41px;top:32px;width:22px;height:30px;border-radius:45% 45% 20% 20%;background:#1c1c1e"></div><div class="a" style="left:45px;top:38px;width:14px;height:19px;border-radius:40%;background:#b8a098"></div><div class="a" style="left:0;top:44.5px;width:99px;height:12.5px;background:rgba(36,36,36,.72);"><div class="t" style="left:14px;top:2.0px;font-size:8.2px;color:#f0f0f0">김현지[ 학부재학 / 국...</div></div><svg style="left:2.5px;top:46.5px" width="9" height="9" viewBox="0 0 9 9"><path d="M3.6 1.2 Q3.6 0.2 4.6 0.2 Q5.6 0.2 5.6 1.2 V4.6 Q5.6 5.6 4.6 5.6 Q3.6 5.6 3.6 4.6 Z" fill="#f04a4a"/><path d="M2 4.2 Q2 7.2 4.6 7.2 Q7.2 7.2 7.2 4.2 M4.6 7.2 V8.6 M3 8.6 H6.2" fill="none" stroke="#f04a4a" stroke-width="0.9"/><path d="M8.4 0.8 L0.8 8.6" stroke="#f04a4a" stroke-width="1.1"/></svg></div>
<div class="tile" style="left:1073.8px;top:189px"><div class="a" style="left:0;top:0;width:100px;height:57px;background:linear-gradient(180deg,#d4d4d0 0%,#d0d0cc 25%,#bcbab4 40%,#bcb8ae 100%)"></div><div class="a" style="left:0;top:0;width:30px;height:10px;border-radius:50%;background:#f4f4f2;filter:blur(3px)"></div><div class="a" style="left:0;top:19px;width:50px;height:26px;background:repeating-linear-gradient(90deg,#a8a8a4 0 5px,#bcbcb8 5px 9px);filter:blur(1px)"></div><div class="a" style="left:50px;top:16px;width:50px;height:41px;background:linear-gradient(90deg,#c4c0b6,#c8c4b8)"></div><div class="a" style="left:40px;top:38px;width:20px;height:22px;border-radius:45%;background:#2a2420;filter:blur(0.6px)"></div><div class="a" style="left:55px;top:40px;width:19px;height:20px;border-radius:45%;background:#342a24;filter:blur(0.6px)"></div><div class="a" style="left:0;top:44.5px;width:44px;height:12.5px;background:rgba(36,36,36,.72);"><div class="t" style="left:14px;top:2.0px;font-size:8.2px;color:#f0f0f0">한지원 .</div></div><svg style="left:2.5px;top:46.5px" width="9" height="9" viewBox="0 0 9 9"><path d="M3.6 1.2 Q3.6 0.2 4.6 0.2 Q5.6 0.2 5.6 1.2 V4.6 Q5.6 5.6 4.6 5.6 Q3.6 5.6 3.6 4.6 Z" fill="#f04a4a"/><path d="M2 4.2 Q2 7.2 4.6 7.2 Q7.2 7.2 7.2 4.2 M4.6 7.2 V8.6 M3 8.6 H6.2" fill="none" stroke="#f04a4a" stroke-width="0.9"/><path d="M8.4 0.8 L0.8 8.6" stroke="#f04a4a" stroke-width="1.1"/></svg></div>
<div class="tile" style="left:970px;top:249px"><div class="a" style="left:0;top:0;width:100px;height:57px;background:#d6dad2"></div><div class="a" style="left:18px;top:0;width:82px;height:45px;background:linear-gradient(160deg,#b0aa9e 0%,#a49c90 50%,#a09688 100%);clip-path:polygon(0 0,100% 0,100% 90%,0 68%)"></div><div class="a" style="left:0;top:0;width:18px;height:57px;background:linear-gradient(90deg,#c4c8c0,#d0d4cc 70%,#e4e6e0 85%,#c8ccc4)"></div><div class="a" style="left:25px;top:41px;width:19px;height:20px;border-radius:45%;background:#2a2420"></div><div class="a" style="left:0;top:44.5px;width:99px;height:12.5px;background:rgba(36,36,36,.72);"><div class="t" style="left:14px;top:2.0px;font-size:8.2px;color:#f0f0f0">방지원[ 학부재학 / 사...</div></div><svg style="left:2.5px;top:46.5px" width="9" height="9" viewBox="0 0 9 9"><path d="M3.6 1.2 Q3.6 0.2 4.6 0.2 Q5.6 0.2 5.6 1.2 V4.6 Q5.6 5.6 4.6 5.6 Q3.6 5.6 3.6 4.6 Z" fill="#f04a4a"/><path d="M2 4.2 Q2 7.2 4.6 7.2 Q7.2 7.2 7.2 4.2 M4.6 7.2 V8.6 M3 8.6 H6.2" fill="none" stroke="#f04a4a" stroke-width="0.9"/><path d="M8.4 0.8 L0.8 8.6" stroke="#f04a4a" stroke-width="1.1"/></svg></div>
<div class="tile" style="left:1073.8px;top:249px"><div class="a" style="left:0;top:0;width:100px;height:57px;background:linear-gradient(90deg,#4a90c4 0%,#6a9cbc 15%,#7e8a90 35%,#7a7a78 60%,#4a4844 80%,#141414 92%,#3a3a38 96%,#0c0c0c 100%)"></div><div class="a" style="left:0;top:18px;width:22px;height:18px;background:#70b0d8;filter:blur(3px);opacity:.8"></div><div class="a" style="left:22px;top:32px;width:12px;height:25px;background:#1c2a26;filter:blur(1px)"></div><div class="a" style="left:34px;top:33px;width:17px;height:12px;background:#9a9484;filter:blur(1px)"></div><div class="a" style="left:51px;top:33px;width:49px;height:24px;background:#0c1410;filter:blur(1px)"></div><div class="a" style="left:25px;top:22px;width:30px;height:2px;background:#505450;filter:blur(1px)"></div><div class="a" style="left:0;top:44.5px;width:66px;height:12.5px;background:rgba(36,36,36,.72);"><div class="t" style="left:14px;top:2.2px;font-size:7.8px;color:#f0f0f0">Rachel Ballard</div></div><svg style="left:2.5px;top:46.5px" width="9" height="9" viewBox="0 0 9 9"><path d="M3.6 1.2 Q3.6 0.2 4.6 0.2 Q5.6 0.2 5.6 1.2 V4.6 Q5.6 5.6 4.6 5.6 Q3.6 5.6 3.6 4.6 Z" fill="#f04a4a"/><path d="M2 4.2 Q2 7.2 4.6 7.2 Q7.2 7.2 7.2 4.2 M4.6 7.2 V8.6 M3 8.6 H6.2" fill="none" stroke="#f04a4a" stroke-width="0.9"/><path d="M8.4 0.8 L0.8 8.6" stroke="#f04a4a" stroke-width="1.1"/></svg></div>
<div class="tile" style="left:970px;top:309px"><div class="a" style="left:0;top:0;width:100px;height:57px;background:linear-gradient(90deg,#f2ecd8 0%,#ece0b8 7%,#505050 8%,#f0f0f0 9%,#f0f0f0 13%,#c05a28 14%,#d06a30 28%,#e8e8ec 30%,#e0e0e4 48%,#e6dee2 52%,#e4dce0 100%)"></div><div class="a" style="left:68px;top:4px;width:13px;height:17px;background:#f6f4f6"></div><div class="a" style="left:36px;top:34px;width:58px;height:26px;border-radius:40% 40% 0 0;background:#a02c34"></div><div class="a" style="left:40px;top:6px;width:46px;height:54px;border-radius:45% 45% 25% 25%;background:#3a1e20"></div><div class="a" style="left:50px;top:12px;width:21px;height:28px;border-radius:45% 45% 48% 48%;background:#d6aea6"></div><div class="a" style="left:54px;top:40px;width:13px;height:10px;background:#c89890"></div><div class="a" style="left:51px;top:22px;width:9px;height:5px;border-radius:40%;border:0.8px solid #6a5a5a"></div><div class="a" style="left:61px;top:22px;width:9px;height:5px;border-radius:40%;border:0.8px solid #6a5a5a"></div><div class="a" style="left:0;top:44.5px;width:79px;height:12.5px;background:rgba(36,36,36,.72);"><div class="t" style="left:14px;top:2.3999999999999995px;font-size:7.4px;color:#f0f0f0">KIM YELYZAVETA .</div></div><svg style="left:2.5px;top:46.5px" width="9" height="9" viewBox="0 0 9 9"><path d="M3.6 1.2 Q3.6 0.2 4.6 0.2 Q5.6 0.2 5.6 1.2 V4.6 Q5.6 5.6 4.6 5.6 Q3.6 5.6 3.6 4.6 Z" fill="#f04a4a"/><path d="M2 4.2 Q2 7.2 4.6 7.2 Q7.2 7.2 7.2 4.2 M4.6 7.2 V8.6 M3 8.6 H6.2" fill="none" stroke="#f04a4a" stroke-width="0.9"/><path d="M8.4 0.8 L0.8 8.6" stroke="#f04a4a" stroke-width="1.1"/></svg></div>
<div class="tile" style="left:1073.8px;top:309px"><div class="a" style="left:0;top:0;width:100px;height:57px;background:linear-gradient(90deg,#a4a296 0%,#b4b2a6 30%,#d2d0c4 60%,#dcdad0 80%,#d0cec4 100%)"></div><div class="a" style="left:0;top:0;width:100px;height:6px;background:linear-gradient(90deg,#5c5c5e 0%,#6a6a6c 50%,#a0a4a8 56%,#a8acb0 100%);filter:blur(1px)"></div><div class="a" style="left:47px;top:50px;width:17px;height:12px;border-radius:50%;background:#2a2826;filter:blur(1px)"></div><div class="a" style="left:0;top:44.5px;width:44px;height:12.5px;background:rgba(36,36,36,.72);"><div class="t" style="left:14px;top:2.0px;font-size:8.2px;color:#f0f0f0">정서현 .</div></div><svg style="left:2.5px;top:46.5px" width="9" height="9" viewBox="0 0 9 9"><path d="M3.6 1.2 Q3.6 0.2 4.6 0.2 Q5.6 0.2 5.6 1.2 V4.6 Q5.6 5.6 4.6 5.6 Q3.6 5.6 3.6 4.6 Z" fill="#f04a4a"/><path d="M2 4.2 Q2 7.2 4.6 7.2 Q7.2 7.2 7.2 4.2 M4.6 7.2 V8.6 M3 8.6 H6.2" fill="none" stroke="#f04a4a" stroke-width="0.9"/><path d="M8.4 0.8 L0.8 8.6" stroke="#f04a4a" stroke-width="1.1"/></svg></div>
<div class="tile" style="left:970px;top:369px"><div class="a" style="left:25px;top:3px;width:50px;height:51px;background:#0c5a3c;overflow:hidden"><div class="a" style="left:17px;top:12px;width:16px;height:16px;border-radius:50%;background:#cfe0da"></div><div class="a" style="left:8.5px;top:33px;width:33px;height:26px;border-radius:50% 50% 0 0;background:#cfe0da"></div></div><div class="a" style="left:0;top:44.5px;width:40px;height:12.5px;background:rgba(48,48,48,.9);"><div class="t" style="left:14px;top:2.0px;font-size:8.2px;color:#f0f0f0">조성우</div></div><svg style="left:2.5px;top:46.5px" width="9" height="9" viewBox="0 0 9 9"><path d="M3.6 1.2 Q3.6 0.2 4.6 0.2 Q5.6 0.2 5.6 1.2 V4.6 Q5.6 5.6 4.6 5.6 Q3.6 5.6 3.6 4.6 Z" fill="#f04a4a"/><path d="M2 4.2 Q2 7.2 4.6 7.2 Q7.2 7.2 7.2 4.2 M4.6 7.2 V8.6 M3 8.6 H6.2" fill="none" stroke="#f04a4a" stroke-width="0.9"/><path d="M8.4 0.8 L0.8 8.6" stroke="#f04a4a" stroke-width="1.1"/></svg></div>
<div class="tile" style="left:1073.8px;top:369px"><div class="t" style="left:0;top:23px;width:100px;text-align:center;font-size:9.5px;font-weight:bold;color:#f2f2f2">김이재 .</div><div class="a" style="left:0;top:44.5px;width:44px;height:12.5px;background:#2e2e2e;"><div class="t" style="left:14px;top:2.0px;font-size:8.2px;color:#f0f0f0">김이재 .</div></div><svg style="left:2.5px;top:46.5px" width="9" height="9" viewBox="0 0 9 9"><path d="M3.6 1.2 Q3.6 0.2 4.6 0.2 Q5.6 0.2 5.6 1.2 V4.6 Q5.6 5.6 4.6 5.6 Q3.6 5.6 3.6 4.6 Z" fill="#f04a4a"/><path d="M2 4.2 Q2 7.2 4.6 7.2 Q7.2 7.2 7.2 4.2 M4.6 7.2 V8.6 M3 8.6 H6.2" fill="none" stroke="#f04a4a" stroke-width="0.9"/><path d="M8.4 0.8 L0.8 8.6" stroke="#f04a4a" stroke-width="1.1"/></svg></div>
<div class="tile" style="left:970px;top:429px"><div class="a" style="left:25px;top:3px;width:50px;height:51px;background:#c43e0e;overflow:hidden"><div class="a" style="left:17px;top:12px;width:16px;height:16px;border-radius:50%;background:#ebc5bb"></div><div class="a" style="left:8.5px;top:33px;width:33px;height:26px;border-radius:50% 50% 0 0;background:#ebc5bb"></div></div><div class="a" style="left:0;top:44.5px;width:44px;height:12.5px;background:rgba(48,48,48,.9);"><div class="t" style="left:14px;top:2.0px;font-size:8.2px;color:#f0f0f0">표정우 .</div></div><svg style="left:2.5px;top:46.5px" width="9" height="9" viewBox="0 0 9 9"><path d="M3.6 1.2 Q3.6 0.2 4.6 0.2 Q5.6 0.2 5.6 1.2 V4.6 Q5.6 5.6 4.6 5.6 Q3.6 5.6 3.6 4.6 Z" fill="#f04a4a"/><path d="M2 4.2 Q2 7.2 4.6 7.2 Q7.2 7.2 7.2 4.2 M4.6 7.2 V8.6 M3 8.6 H6.2" fill="none" stroke="#f04a4a" stroke-width="0.9"/><path d="M8.4 0.8 L0.8 8.6" stroke="#f04a4a" stroke-width="1.1"/></svg></div>
<div class="tile" style="left:1073.8px;top:429px"><div class="t" style="left:0;top:23px;width:100px;text-align:center;font-size:9.5px;font-weight:bold;color:#f2f2f2">서지윤</div><div class="a" style="left:0;top:44.5px;width:40px;height:12.5px;background:#2e2e2e;"><div class="t" style="left:14px;top:2.0px;font-size:8.2px;color:#f0f0f0">서지윤</div></div><svg style="left:2.5px;top:46.5px" width="9" height="9" viewBox="0 0 9 9"><path d="M3.6 1.2 Q3.6 0.2 4.6 0.2 Q5.6 0.2 5.6 1.2 V4.6 Q5.6 5.6 4.6 5.6 Q3.6 5.6 3.6 4.6 Z" fill="#f04a4a"/><path d="M2 4.2 Q2 7.2 4.6 7.2 Q7.2 7.2 7.2 4.2 M4.6 7.2 V8.6 M3 8.6 H6.2" fill="none" stroke="#f04a4a" stroke-width="0.9"/><path d="M8.4 0.8 L0.8 8.6" stroke="#f04a4a" stroke-width="1.1"/></svg></div>
<div class="tile" style="left:970px;top:489px"><div class="t" style="left:0;top:23px;width:100px;text-align:center;font-size:9.5px;font-weight:bold;color:#f2f2f2">Munisa&nbsp; Mamadi...</div><div class="a" style="left:0;top:44.5px;width:87px;height:12.5px;background:#2e2e2e;"><div class="t" style="left:14px;top:2.0px;font-size:8.2px;color:#f0f0f0">Munisa Mamadieva</div></div><svg style="left:2.5px;top:46.5px" width="9" height="9" viewBox="0 0 9 9"><path d="M3.6 1.2 Q3.6 0.2 4.6 0.2 Q5.6 0.2 5.6 1.2 V4.6 Q5.6 5.6 4.6 5.6 Q3.6 5.6 3.6 4.6 Z" fill="#f04a4a"/><path d="M2 4.2 Q2 7.2 4.6 7.2 Q7.2 7.2 7.2 4.2 M4.6 7.2 V8.6 M3 8.6 H6.2" fill="none" stroke="#f04a4a" stroke-width="0.9"/><path d="M8.4 0.8 L0.8 8.6" stroke="#f04a4a" stroke-width="1.1"/></svg></div>
<div class="tile" style="left:1073.8px;top:489px"><div class="t" style="left:0;top:23px;width:100px;text-align:center;font-size:9.5px;font-weight:bold;color:#f2f2f2">양수진 .</div><div class="a" style="left:0;top:44.5px;width:44px;height:12.5px;background:#2e2e2e;"><div class="t" style="left:14px;top:2.0px;font-size:8.2px;color:#f0f0f0">양수진 .</div></div><svg style="left:2.5px;top:46.5px" width="9" height="9" viewBox="0 0 9 9"><path d="M3.6 1.2 Q3.6 0.2 4.6 0.2 Q5.6 0.2 5.6 1.2 V4.6 Q5.6 5.6 4.6 5.6 Q3.6 5.6 3.6 4.6 Z" fill="#f04a4a"/><path d="M2 4.2 Q2 7.2 4.6 7.2 Q7.2 7.2 7.2 4.2 M4.6 7.2 V8.6 M3 8.6 H6.2" fill="none" stroke="#f04a4a" stroke-width="0.9"/><path d="M8.4 0.8 L0.8 8.6" stroke="#f04a4a" stroke-width="1.1"/></svg></div>
<div class="tile" style="left:970px;top:549px"><div class="t" style="left:0;top:23px;width:100px;text-align:center;font-size:9.5px;font-weight:bold;color:#f2f2f2">이다경 .</div><div class="a" style="left:0;top:44.5px;width:44px;height:12.5px;background:#2e2e2e;"><div class="t" style="left:14px;top:2.0px;font-size:8.2px;color:#f0f0f0">이다경 .</div></div><svg style="left:2.5px;top:46.5px" width="9" height="9" viewBox="0 0 9 9"><path d="M3.6 1.2 Q3.6 0.2 4.6 0.2 Q5.6 0.2 5.6 1.2 V4.6 Q5.6 5.6 4.6 5.6 Q3.6 5.6 3.6 4.6 Z" fill="#f04a4a"/><path d="M2 4.2 Q2 7.2 4.6 7.2 Q7.2 7.2 7.2 4.2 M4.6 7.2 V8.6 M3 8.6 H6.2" fill="none" stroke="#f04a4a" stroke-width="0.9"/><path d="M8.4 0.8 L0.8 8.6" stroke="#f04a4a" stroke-width="1.1"/></svg></div>
<div class="tile" style="left:1073.8px;top:549px"><div class="t" style="left:0;top:23px;width:100px;text-align:center;font-size:9.5px;font-weight:bold;color:#f2f2f2">조성민 .</div><div class="a" style="left:0;top:44.5px;width:44px;height:12.5px;background:#2e2e2e;"><div class="t" style="left:14px;top:2.0px;font-size:8.2px;color:#f0f0f0">조성민 .</div></div><svg style="left:2.5px;top:46.5px" width="9" height="9" viewBox="0 0 9 9"><path d="M3.6 1.2 Q3.6 0.2 4.6 0.2 Q5.6 0.2 5.6 1.2 V4.6 Q5.6 5.6 4.6 5.6 Q3.6 5.6 3.6 4.6 Z" fill="#f04a4a"/><path d="M2 4.2 Q2 7.2 4.6 7.2 Q7.2 7.2 7.2 4.2 M4.6 7.2 V8.6 M3 8.6 H6.2" fill="none" stroke="#f04a4a" stroke-width="0.9"/><path d="M8.4 0.8 L0.8 8.6" stroke="#f04a4a" stroke-width="1.1"/></svg></div>
<!-- annotation pen -->
<div class="a" style="left:12px;top:577px;width:24px;height:24px;border-radius:50%;background:#1c1e22;border:1px solid #2a2c30"></div>
<div class="a" style="left:12px;top:577px;width:24px;height:8px;border-radius:12px 12px 0 0;background:#3a3c40;clip-path:inset(0 0 0 0)"></div>
<svg style="left:18.5px;top:583px" width="11" height="11" viewBox="0 0 11 11"><path d="M1 9.8 L1.4 7.4 L7.6 1.2 Q8.3 0.6 9 1.2 L9.8 2 Q10.4 2.7 9.8 3.4 L3.6 9.6 Z M6.6 2.2 L8.8 4.4" fill="none" stroke="#2ec35a" stroke-width="1"/></svg>

</body></html>
